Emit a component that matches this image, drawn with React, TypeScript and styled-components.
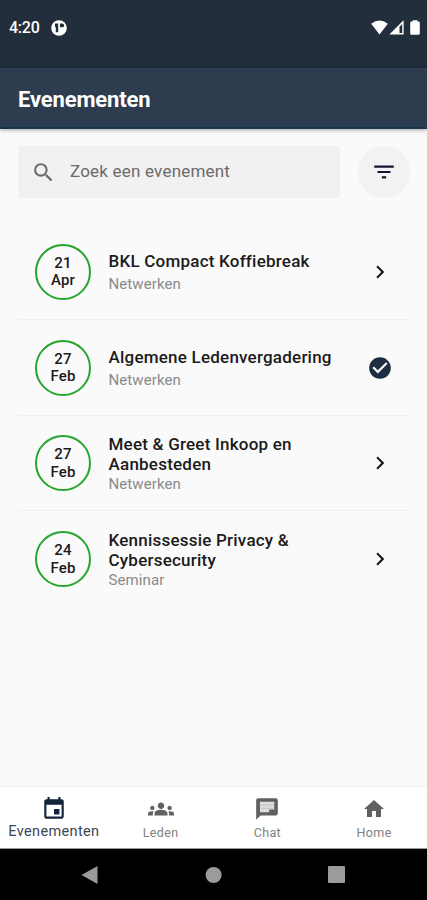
import React from "react";
import styled, { createGlobalStyle } from "styled-components";
import {
  MdSearch,
  MdFilterList,
  MdChevronRight,
  MdCheckCircle,
  MdEvent,
  MdGroups,
  MdHome,
} from "react-icons/md";

const GlobalStyle = createGlobalStyle`
  *, *::before, *::after { box-sizing: border-box; }
  body { margin: 0; background: #fafafa; font-family: Roboto, "Liberation Sans", sans-serif; }
  h1, h2, p, ul { margin: 0; padding: 0; }
  button { border: 0; padding: 0; background: none; font: inherit; }
  svg { display: block; flex-shrink: 0; }
`;

const Screen = styled.div`
  width: 427px;
  height: 900px;
  display: flex;
  flex-direction: column;
  background: #fafafa;
  overflow: hidden;
`;

const StatusBar = styled.div`
  height: 68px;
  flex-shrink: 0;
  display: flex;
  justify-content: space-between;
  padding: 18px 7px 0 9px;
  background: #222e3b;
  color: #fff;
`;

const StatusGroup = styled.div<{ $gap: number }>`
  display: flex;
  align-items: center;
  gap: ${(p) => p.$gap}px;
  height: 19px;
`;

const Clock = styled.span`
  font-size: 16px;
  line-height: 19px;
  font-weight: 500;
  letter-spacing: -0.25px;
`;

const AppBar = styled.header`
  height: 61px;
  flex-shrink: 0;
  display: flex;
  align-items: center;
  padding: 4px 18px 0;
  background: #2d3c4e;
  border-bottom: 2px solid #17384a;
  box-shadow: 0 1px 4px rgba(0, 0, 0, 0.35);
`;

const Title = styled.h1`
  font-size: 22px;
  line-height: 26px;
  font-weight: 700;
  letter-spacing: -0.15px;
  color: #fff;
`;

const Toolbar = styled.div`
  display: flex;
  justify-content: space-between;
  padding: 17px 17px 0 18px;
`;

const SearchField = styled.label`
  width: 322px;
  height: 52px;
  display: flex;
  align-items: center;
  gap: 14px;
  padding: 0 13px;
  border-radius: 3px;
  background: #f1f1f1;
  color: #6b6b6b;
`;

const Placeholder = styled.span`
  font-size: 17px;
  line-height: 22px;
  letter-spacing: 0.2px;
  margin-top: -2px;
`;

const FilterButton = styled.button`
  width: 52px;
  height: 52px;
  display: grid;
  place-items: center;
  border-radius: 50%;
  background: #f2f2f2;
  color: #10182e;
`;

const EventList = styled.ul`
  flex: 1;
  list-style: none;
  padding: 26px 18px 0;
`;

const EventRow = styled.li`
  height: 95.8px;
  display: flex;
  align-items: center;
  padding: 1px 17px 0;
  border-bottom: 1px solid #f0f0f0;

  &:last-child {
    border-bottom-color: transparent;
  }
`;

const DateBadge = styled.div`
  width: 56px;
  height: 56px;
  flex-shrink: 0;
  display: flex;
  flex-direction: column;
  align-items: center;
  justify-content: center;
  padding-top: 1px;
  border: 2px solid #25a52b;
  border-radius: 50%;
  font-size: 15px;
  line-height: 17.5px;
  font-weight: 500;
  letter-spacing: 0.2px;
  color: #1c1c1c;
`;

const EventText = styled.div`
  width: 240px;
  margin-left: 17.5px;
`;

const EventTitle = styled.h2`
  font-size: 17px;
  line-height: 20.5px;
  font-weight: 500;
  letter-spacing: 0.22px;
  color: #1b1b1b;
  white-space: pre-line;
`;

const EventKind = styled.p<{ $spaced: boolean }>`
  margin-top: ${(p) => (p.$spaced ? 3.5 : 0)}px;
  font-size: 15px;
  line-height: 18px;
  letter-spacing: 0.1px;
  color: #8a8a8a;
`;

const Trailing = styled.span<{ $color: string }>`
  width: 26px;
  display: grid;
  place-items: center;
  margin-left: auto;
  margin-right: -1px;
  color: ${(p) => p.$color};
`;

const TabBar = styled.nav`
  height: 63px;
  flex-shrink: 0;
  display: grid;
  grid-template-columns: repeat(4, 1fr);
  background: #fff;
  border-top: 1px solid #f0f0f0;
  border-bottom: 1px solid #999;
`;

const Tab = styled.button<{ $active: boolean }>`
  display: flex;
  flex-direction: column;
  align-items: center;
  padding-top: 9px;
  padding-left: 1px;
  color: ${(p) => (p.$active ? "#14243c" : "#616161")};
`;

const TabIcon = styled.span`
  height: 26px;
  display: grid;
  place-items: center;
`;

const TabLabel = styled.span<{ $active: boolean }>`
  margin-top: ${(p) => (p.$active ? 1 : 2)}px;
  font-size: ${(p) => (p.$active ? 14.5 : 12.5)}px;
  line-height: 18px;
  font-weight: 400;
  letter-spacing: 0.35px;
  color: ${(p) => (p.$active ? "#3c4654" : "#808080")};
`;

const SystemBar = styled.div`
  height: 51px;
  flex-shrink: 0;
  display: flex;
  align-items: center;
  justify-content: space-between;
  padding: 0 82px 0 81px;
  background: #000;
`;

const RecordingIcon = () => (
  <svg width="16" height="16" viewBox="0 0 16 16">
    <circle cx="8" cy="8" r="7.8" fill="#fff" />
    <path d="M4 3.5h3.2v8.8H4.8V7H4z" fill="#222e3b" />
    <path d="M9 3.5h2.2a1.9 1.9 0 0 1 0 3.8H9z" fill="#222e3b" />
  </svg>
);

const WifiIcon = () => (
  <svg width="17" height="15" viewBox="0 0 17 15">
    <path d="M.2 3.8Q8.5-2.8 16.8 3.8L8.5 14.6z" fill="#fff" />
  </svg>
);

const SignalIcon = () => (
  <svg width="15" height="15" viewBox="0 0 15 15">
    <path d="M.3 14.6 14.6.3v14.3z" fill="#fff" />
    <path d="M10.5 6.8 13.2 4v9.1h-2.7z" fill="#222e3b" />
  </svg>
);

const BatteryIcon = () => (
  <svg width="10" height="15" viewBox="0 0 10 15">
    <path d="M2.5.3h5v1.2h1q1.3 0 1.3 1.3v10.6q0 1.3-1.3 1.3h-7Q.2 14.7.2 13.4V2.8q0-1.3 1.3-1.3h1z" fill="#fff" />
  </svg>
);

const ChatIcon = () => (
  <svg width="26" height="26" viewBox="0 0 24 24">
    <path d="M4 2h16a2 2 0 0 1 2 2v12a2 2 0 0 1-2 2H6l-4 4V4a2 2 0 0 1 2-2z" fill="#616161" />
    <path d="M5.5 5.2h13.2v7.3H14V15H5.5z" fill="#dedede" />
    <path d="M6 8.2h12M6 11.4h12" stroke="#c8c8c8" strokeWidth="1" />
  </svg>
);

const BackIcon = () => (
  <svg width="17" height="20" viewBox="0 0 17 20">
    <path d="M16.5 1v18L.5 10z" fill="#9b9b9b" />
  </svg>
);

const HomeKeyIcon = () => (
  <svg width="18" height="16" viewBox="0 0 18 16">
    <circle cx="9.6" cy="8" r="8" fill="#9b9b9b" />
  </svg>
);

const RecentsIcon = () => (
  <svg width="17" height="17" viewBox="0 0 17 17">
    <rect width="17" height="17" rx="1" fill="#9b9b9b" />
  </svg>
);

const events = [
  { day: "21", month: "Apr", title: "BKL Compact Koffiebreak", kind: "Netwerken", joined: false },
  { day: "27", month: "Feb", title: "Algemene Ledenvergadering", kind: "Netwerken", joined: true },
  { day: "27", month: "Feb", title: "Meet & Greet Inkoop en\nAanbesteden", kind: "Netwerken", joined: false },
  { day: "24", month: "Feb", title: "Kennissessie Privacy &\nCybersecurity", kind: "Seminar", joined: false },
];

const tabs = [
  { label: "Evenementen", icon: <MdEvent size={26} />, active: true },
  { label: "Leden", icon: <MdGroups size={26} />, active: false },
  { label: "Chat", icon: <ChatIcon />, active: false },
  { label: "Home", icon: <MdHome size={24} />, active: false },
];

export default function App() {
  return (
    <>
      <GlobalStyle />
      <Screen>
        <StatusBar>
          <StatusGroup $gap={11}>
            <Clock>4:20</Clock>
            <RecordingIcon />
          </StatusGroup>
          <StatusGroup $gap={6}>
            <StatusGroup $gap={1}>
              <WifiIcon />
              <SignalIcon />
            </StatusGroup>
            <BatteryIcon />
          </StatusGroup>
        </StatusBar>
        <AppBar>
          <Title>Evenementen</Title>
        </AppBar>
        <Toolbar>
          <SearchField>
            <MdSearch size={25} />
            <Placeholder>Zoek een evenement</Placeholder>
          </SearchField>
          <FilterButton aria-label="Filter">
            <MdFilterList size={26} />
          </FilterButton>
        </Toolbar>
        <EventList>
          {events.map((event) => (
            <EventRow key={event.title}>
              <DateBadge>
                <span>{event.day}</span>
                <span>{event.month}</span>
              </DateBadge>
              <EventText>
                <EventTitle>{event.title}</EventTitle>
                <EventKind $spaced={!event.title.includes("\n")}>{event.kind}</EventKind>
              </EventText>
              <Trailing $color={event.joined ? "#1e2e42" : "#1b1b28"}>
                {event.joined ? <MdCheckCircle size={26} /> : <MdChevronRight size={26} />}
              </Trailing>
            </EventRow>
          ))}
        </EventList>
        <TabBar>
          {tabs.map((tab) => (
            <Tab key={tab.label} $active={tab.active}>
              <TabIcon>{tab.icon}</TabIcon>
              <TabLabel $active={tab.active}>{tab.label}</TabLabel>
            </Tab>
          ))}
        </TabBar>
        <SystemBar>
          <BackIcon />
          <HomeKeyIcon />
          <RecentsIcon />
        </SystemBar>
      </Screen>
    </>
  );
}
